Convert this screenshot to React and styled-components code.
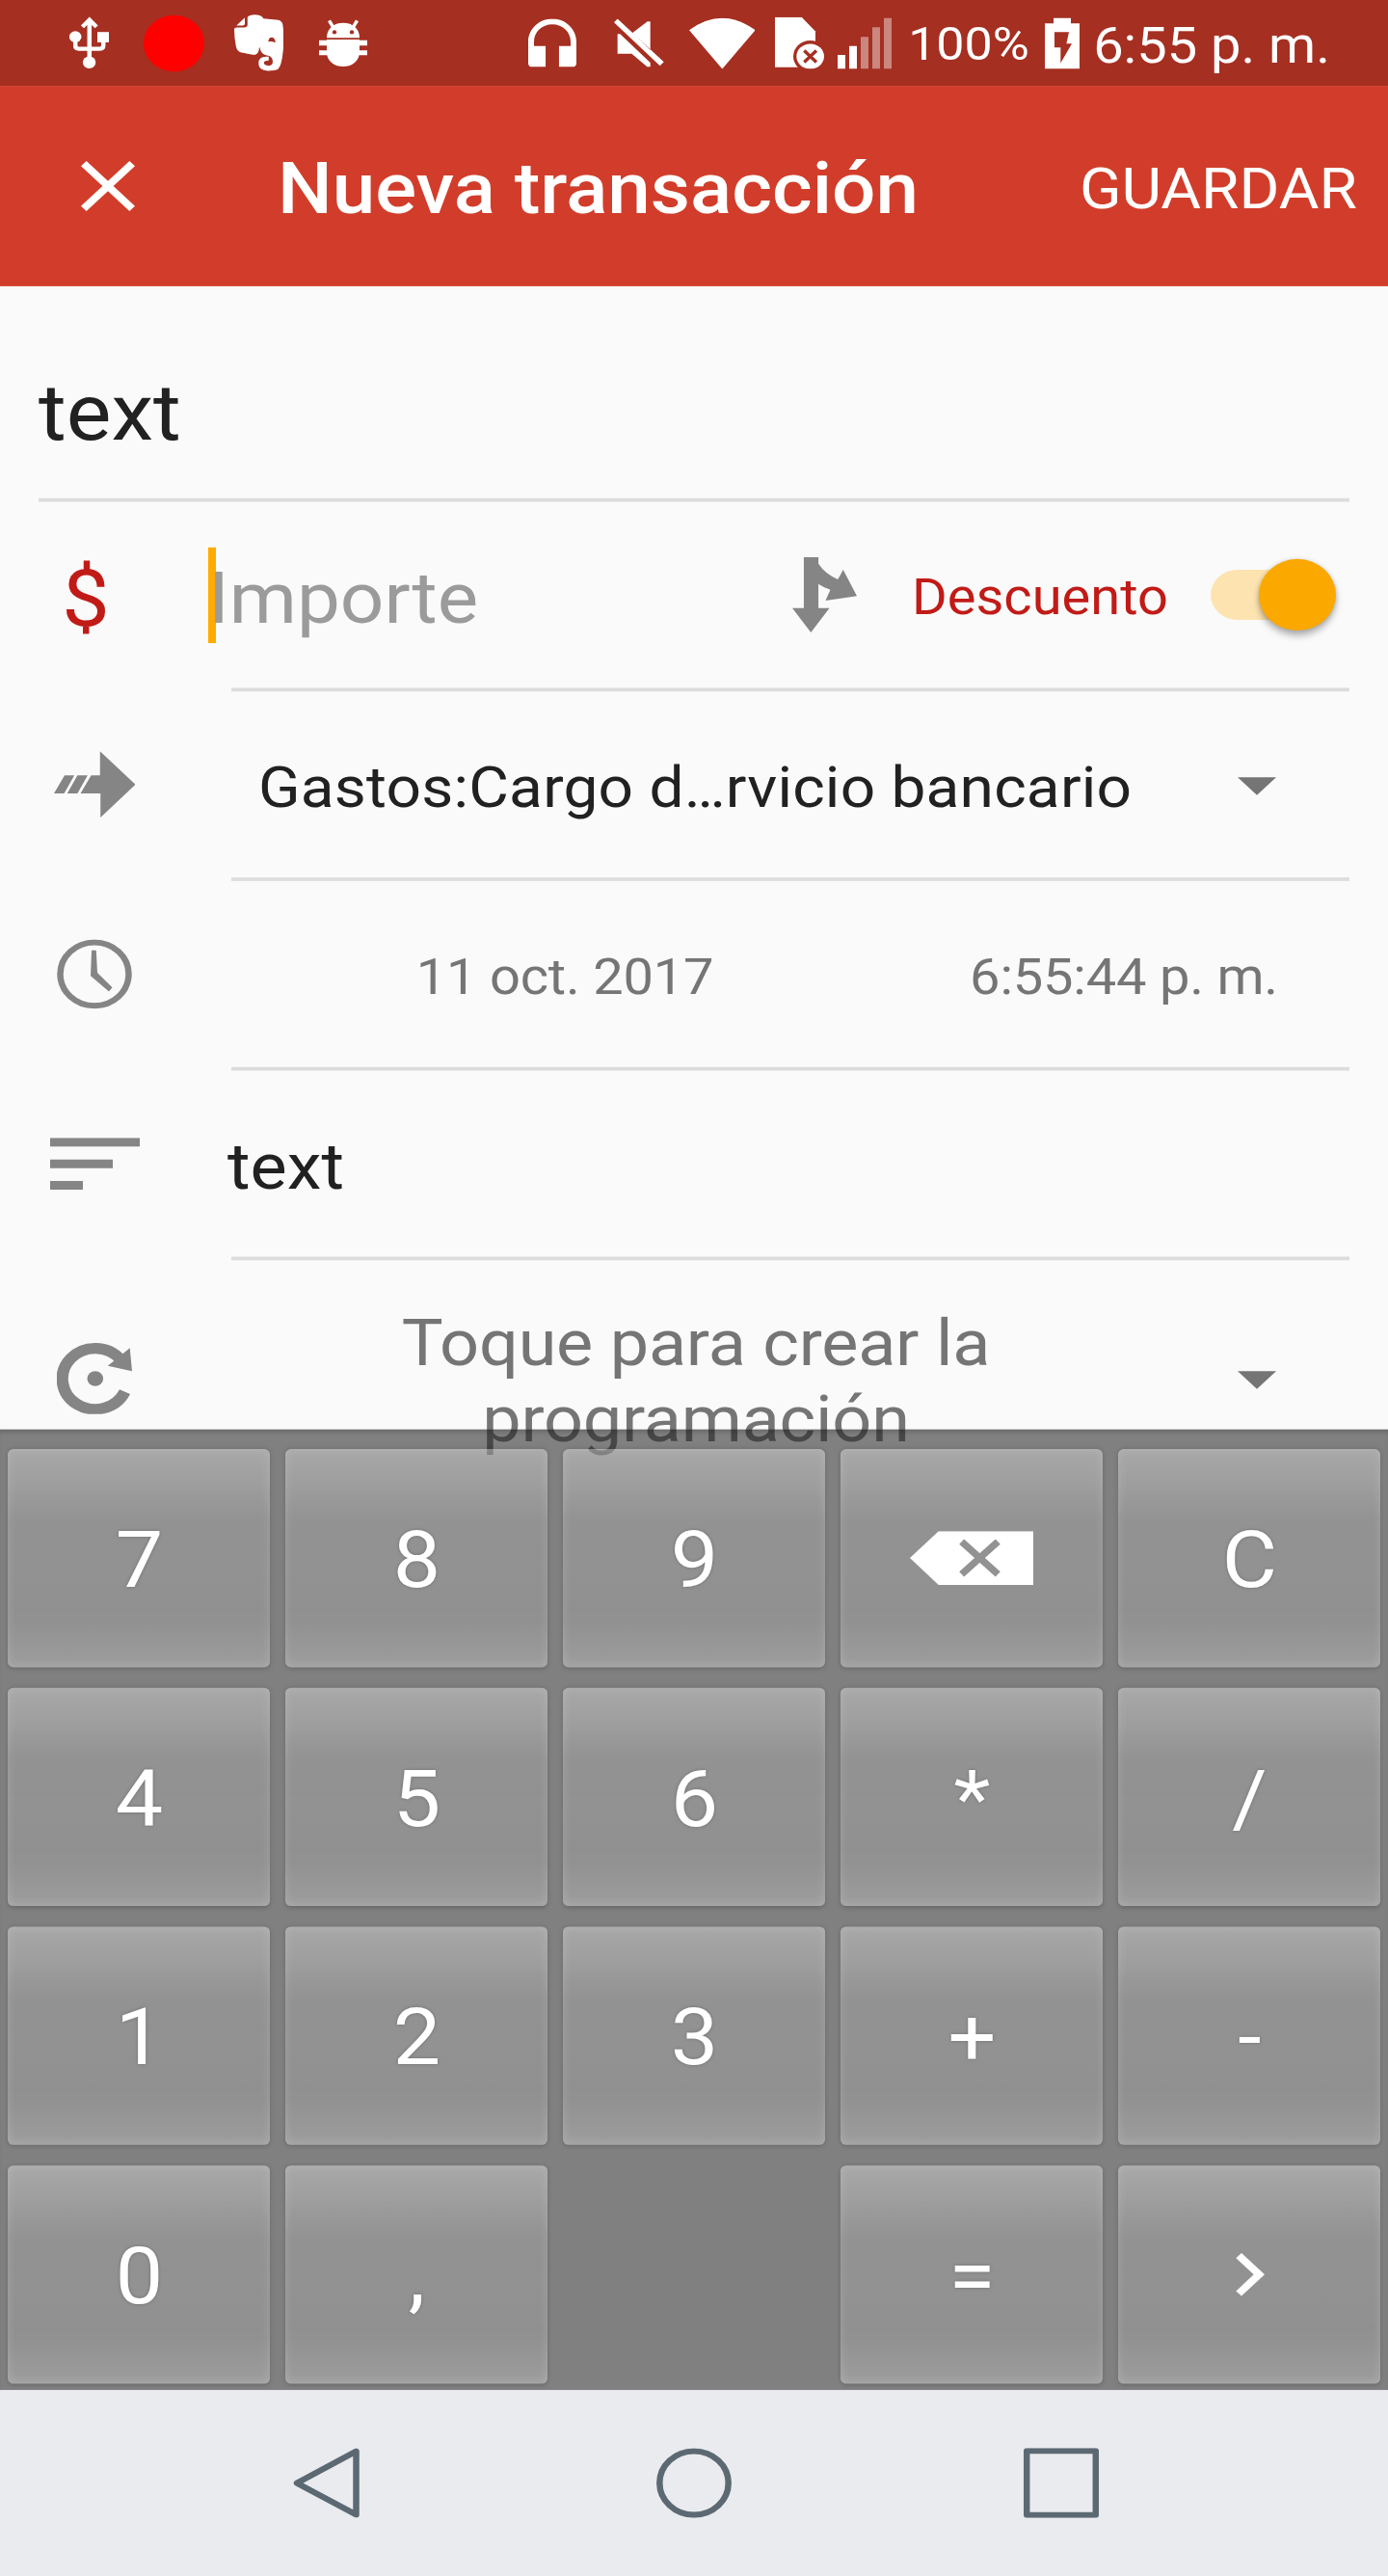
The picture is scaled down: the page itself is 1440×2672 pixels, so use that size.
import React from 'react';
import styled, { createGlobalStyle } from 'styled-components';

const STATUS_RED = '#a52f21';
const ICON_GREY = '#858585';

const GlobalStyle = createGlobalStyle`
  *, *::before, *::after { box-sizing: border-box; }
  body {
    margin: 0;
    background: #fafafa;
    font-family: Roboto, "Noto Sans", sans-serif;
  }
`;

const Viewport = styled.div`
  width: 1440px;
  height: 2672px;
  overflow: hidden;
`;

/* The 18:9 screen (360dp x 720dp at 4px per dp) fitted to the viewport height. */
const Screen = styled.div`
  width: 1440px;
  height: 2880px;
  display: flex;
  flex-direction: column;
  background: #fafafa;
  transform: scaleY(0.92778);
  transform-origin: 0 0;
`;

/* Android's font padding: a little more room above the line than below. */
const Text = styled.span`
  display: block;
  margin-top: ${(p) => (p.$drop || 0) * 2}px;
  padding: 0.129em 0 0.027em;
  font-size: ${(p) => p.$size}px;
  font-weight: ${(p) => p.$weight || 400};
  letter-spacing: ${(p) => p.$tracking || 0}px;
  color: ${(p) => p.$color || '#212121'};
  line-height: 1.172;
  white-space: nowrap;
`;

const StatusBar = styled.header`
  flex: none;
  height: 96px;
  padding: 0 60px 0 72px;
  display: flex;
  align-items: center;
  justify-content: space-between;
  background: ${STATUS_RED};
  color: #fff;
`;

const StatusGroup = styled.div`
  display: flex;
  align-items: center;
`;

const StatusIcon = styled.svg`
  display: block;
  flex: none;
  margin-right: ${(p) => p.$after || 0}px;
`;

const RecordDot = styled.span`
  width: 63px;
  height: 63px;
  margin-right: 31px;
  margin-left: 36px;
  border-radius: 50%;
  background: #f00;
`;

const BatteryLevel = styled(Text)`
  width: 142px;
`;

const Clock = styled(Text)`
  margin-left: 14px;
`;

const AppBar = styled.div`
  flex: none;
  height: 224px;
  padding: 0 32px 0 64px;
  display: flex;
  align-items: center;
  background: #d13d2a;
`;

const CloseIcon = styled.svg`
  width: 96px;
  height: 96px;
  fill: #fff;
`;

const Title = styled(Text)`
  flex: 1;
  margin-left: 128px;
`;

const Form = styled.main`
  flex: none;
  height: 1278px;
`;

const DescriptionField = styled.div`
  height: 237px;
  padding: 79px 0 0 40px;
`;

const Divider = styled.hr`
  height: 4px;
  margin: 0 40px 0 ${(p) => p.$inset}px;
  border: 0;
  background: #dcdcdc;
`;

const Row = styled.div`
  height: ${(p) => p.$height || 208}px;
  padding-right: 40px;
  display: flex;
  align-items: center;
`;

const IconCell = styled.div`
  flex: none;
  width: 196px;
  padding-right: ${(p) => p.$shift || 0}px;
  display: flex;
  justify-content: center;
`;

const Field = styled.div`
  flex: ${(p) => (p.$width ? 'none' : 1)};
  width: ${(p) => (p.$width ? `${p.$width}px` : 'auto')};
  margin-left: ${(p) => p.$left || 0}px;
  text-align: ${(p) => p.$align || 'left'};
`;

const AmountField = styled.div`
  width: 606px;
  height: 107px;
  margin-left: 20px;
  display: flex;
  align-items: center;
  border-left: 8px solid #ffab00;
`;

const AmountHint = styled(Text)`
  margin-left: -8px;
`;

const TypeLabel = styled(Text)`
  width: 310px;
  margin-left: 57px;
`;

const SwitchTrack = styled.div`
  width: 120px;
  height: 56px;
  display: flex;
  align-items: center;
  justify-content: flex-end;
  border-radius: 28px;
  background: #fde3b0;
`;

const SwitchThumb = styled.div`
  flex: none;
  width: 80px;
  height: 80px;
  margin-right: -10px;
  border-radius: 50%;
  background: #fba800;
  box-shadow: 0 6px 8px rgba(0, 0, 0, 0.28), 0 0 5px rgba(0, 0, 0, 0.14);
`;

const Caret = styled.span`
  flex: none;
  width: 0;
  height: 0;
  margin-right: 76px;
  margin-top: 4px;
  border: 20px solid transparent;
  border-top-color: #757575;
  border-bottom: 0;
`;

const Keyboard = styled.div`
  flex: none;
  position: relative;
  height: 1074px;
  padding: 21.5px 8px 7.5px;
  display: grid;
  grid-template-columns: repeat(5, 272px);
  grid-template-rows: repeat(4, 244px);
  gap: 23px 16px;
  background: rgba(39, 39, 39, 0.578);
  box-shadow: inset 0 5px 5px -2px rgba(0, 0, 0, 0.18);
`;

const Key = styled.button`
  padding: 0;
  display: flex;
  align-items: center;
  justify-content: center;
  border: 0;
  border-radius: 6px;
  font-family: inherit;
  text-shadow: 0 0 4px rgba(0, 0, 0, 0.25);
  background: linear-gradient(
    rgba(255, 255, 255, 0.31) 0%,
    rgba(255, 255, 255, 0.24) 15%,
    rgba(255, 255, 255, 0.15) 33%,
    rgba(255, 255, 255, 0.135) 78%,
    rgba(255, 255, 255, 0.23) 100%
  );
  box-shadow: inset 0 0 10px rgba(255, 255, 255, 0.17), 0 1px 5px rgba(0, 0, 0, 0.2);
`;

const KeyLabel = styled(Text)`
  padding-left: 1px;
`;

const EmptyCell = styled.span``;

const NavBar = styled.nav`
  flex: none;
  height: 208px;
  padding: 0 300px;
  display: flex;
  align-items: center;
  justify-content: space-between;
  background: #e9ebee;
`;

const NavIcon = styled.svg`
  width: 78px;
  height: 78px;
  fill: none;
  stroke: #5c6972;
  stroke-width: 6.5;
  stroke-linejoin: round;
`;

const UsbIcon = () => (
  <StatusIcon width="41" height="96" viewBox="72 0 41 96" fill="#fff">
    <circle cx="78.2" cy="41" r="6.3" />
    <rect x="101" y="35.8" width="12" height="11.5" />
    <circle cx="92.6" cy="69.8" r="6.7" />
    <path
      d="M92.8 23V66M85.5 30l7.3-7.8 7.3 7.8M78.2 44v7q0 3.5 3.5 3.5h22q3.5 0 3.5-3.5v-7"
      fill="none"
      stroke="#fff"
      strokeWidth="4.5"
    />
  </StatusIcon>
);

const ElephantIcon = () => (
  <StatusIcon $after={37} width="51.4" height="63.2" viewBox="528 45 112 176" preserveAspectRatio="none">
    <g fill="#fff">
      <path d="M533 80L552 55V75Q552 80 547 80z" />
      <path d="M558 54Q562 46 574 46Q590 46 594 58L628 63Q637 66 638 80Q642 120 638 165Q635 205 627 216Q620 221 604 221Q583 220 583 198Q583 177 600 177H606V189Q595 189 595 197Q596 204 606 205Q616 204 615 190Q614 175 602 173Q588 170 585 146L583 160Q580 172 570 171L544 164Q535 161 532 145Q528 118 528 93Q528 86 534 86H550Q558 86 558 78z" />
    </g>
    <path d="M605 130Q606 117 613 117Q621 119 621 133Q613 128 605 130z" fill={STATUS_RED} />
  </StatusIcon>
);

const DebugIcon = () => (
  <StatusIcon width="50" height="96" viewBox="331 0 50 96" fill="#fff">
    <path d="M339 42.2c0-10 7-16.6 17-16.6s17 6.6 17 16.6z" />
    <path d="M341.5 23l4.5 8M370.5 23l-4.5 8" stroke="#fff" strokeWidth="3.5" />
    <circle cx="347" cy="36" r="2.2" fill={STATUS_RED} />
    <circle cx="365" cy="36" r="2.2" fill={STATUS_RED} />
    <path d="M331 45h8v-.8h34v.8h8v5.800h-8v5.400h8v5.500h-8.400c-1.500 7.500-8 12.700-16.600 12.700s-15.200-5.200-16.700-12.700H331v-5.500h8v-5.400h-8z" />
  </StatusIcon>
);

const HeadsetIcon = () => (
  <StatusIcon $after={39.3} width="50" height="54" viewBox="3 1 18 19" preserveAspectRatio="none" fill="#fff">
    <path d="M12 1c-4.970 0-9 4.030-9 9v8.500c0 .9.600 1.500 1.500 1.500h5v-8.300H5.160V10c0-3.870 2.980-6.840 6.840-6.840S18.840 6.130 18.840 10v1.700H14.500V20h5c.9 0 1.500-.6 1.500-1.500V10c0-4.970-4.030-9-9-9z" />
  </StatusIcon>
);

const MuteIcon = () => (
  <StatusIcon $after={25.7} width="52" height="54" viewBox="358 55 156 149" preserveAspectRatio="none" fill="#fff">
    <path d="M471 63h-9l-46 35 55 53zM369 102h8l94 88v14h-9l-49-41h-44zM358 66l11-11 144 133-12 12z" />
  </StatusIcon>
);

const WifiIcon = () => (
  <StatusIcon $after={20.7} width="68.6" height="57" viewBox="590 54 206 159" preserveAspectRatio="none" fill="#fff">
    <path d="M590 92Q693 17 796 92L693 213z" />
  </StatusIcon>
);

const NoSimIcon = () => (
  <StatusIcon $after={13.7} width="51.3" height="58" viewBox="858 55 154 162" preserveAspectRatio="none" fill="#fff">
    <path d="M858 55h83l43 45v112H858z" />
    <ellipse cx="968" cy="178" rx="53" ry="50" fill={STATUS_RED} />
    <ellipse cx="968" cy="178" rx="43" ry="39" />
    <path d="M949 160l38 36M987 160l-38 36" stroke={STATUS_RED} strokeWidth="10" />
  </StatusIcon>
);

const SignalIcon = () => (
  <StatusIcon $after={17} width="56" height="57" viewBox="1053 55 168 158" preserveAspectRatio="none" fill="#fff">
    <path d="M1053 170h24v43h-24zM1089 142h24v71h-24z" />
    <path opacity=".42" d="M1125 114h24v99h-24zM1161 84h24v129h-24zM1197 55h24v158h-24z" />
  </StatusIcon>
);

const BatteryIcon = () => (
  <StatusIcon width="36" height="57" viewBox="438 55 108 158" preserveAspectRatio="none">
    <path
      fill="#fff"
      fillRule="evenodd"
      d="M465 55h54v17h27v141H438V72h27zM468 99v48h19v48l35-60h-17l8-36z"
    />
  </StatusIcon>
);

const SplitIcon = () => (
  <svg width="67" height="84" viewBox="223 233 146 234" preserveAspectRatio="none" fill={ICON_GREY}>
    <path d="M249 233h33v20q14 30 44 49l12-30 31 82-71 14 11-34q-17-8-27-18v75h25l-42 76-42-76h26z" />
  </svg>
);

const TransferIcon = () => (
  <svg width="84.5" height="74" viewBox="122 179 184 204" preserveAspectRatio="none" fill={ICON_GREY}>
    <path d="M146 253h22l-23 56h-23zM175 253h23l-23 56h-23zM206 253h20v-74l80 102-79 102v-74h-45z" />
  </svg>
);

const ClockIcon = () => (
  <svg width="78" height="78" viewBox="0 0 78 78">
    <circle cx="39" cy="39" r="35.5" fill="none" stroke={ICON_GREY} strokeWidth="6.5" />
    <path d="M36 12.500h4.800l1.200 25L57.500 54l-3.500 4.500L35 41z" fill={ICON_GREY} />
  </svg>
);

const NotesIcon = () => (
  <svg width="93" height="58" viewBox="0 0 93 58" fill={ICON_GREY}>
    <path d="M0 0h93v9.700H0zM0 24.300h65V34H0zM0 48.300h34v9.700H0z" />
  </svg>
);

const RecurrenceIcon = () => (
  <svg width="78" height="80" viewBox="0 0 78 80">
    <path d="M70.500 55A34 34 0 1 1 66 19" fill="none" stroke={ICON_GREY} strokeWidth="12.2" />
    <path d="M75.700 6L78 32 52.800 26z" fill={ICON_GREY} />
    <circle cx="39.8" cy="40.3" r="8.3" fill={ICON_GREY} />
  </svg>
);

const BackspaceIcon = () => (
  <svg width="128" height="60" viewBox="488 1051 279 125" preserveAspectRatio="none">
    <path fill="#fff" d="M488 1113l65-62h214v125H553z" />
    <path d="M605 1075l82 76M687 1075l-82 76" stroke="#929292" strokeWidth="16" />
  </svg>
);

const NextIcon = () => (
  <svg width="96" height="96" viewBox="0 0 24 24" fill="#fff">
    <path d="M8.590 16.590L13.170 12 8.590 7.410 10 6l6 6-6 6z" />
  </svg>
);

const KEYS = [
  '7', '8', '9', 'delete', 'C',
  '4', '5', '6', '*', '/',
  '1', '2', '3', '+', '-',
  '0', ',', '', '=', 'next',
];

function KeyFace({ value }) {
  if (value === 'delete') return <BackspaceIcon />;
  if (value === 'next') return <NextIcon />;
  return <KeyLabel $size={88} $color="#fff" $drop={-2}>{value}</KeyLabel>;
}

export default function App() {
  return (
    <Viewport>
      <GlobalStyle />
      <Screen>
        <StatusBar>
          <StatusGroup>
            <UsbIcon />
            <RecordDot />
            <ElephantIcon />
            <DebugIcon />
          </StatusGroup>
          <StatusGroup>
            <HeadsetIcon />
            <MuteIcon />
            <WifiIcon />
            <NoSimIcon />
            <SignalIcon />
            <BatteryLevel $size={52} $color="#fff">100%</BatteryLevel>
            <BatteryIcon />
            <Clock $size={56} $color="#fff" $drop={1}>6:55 p. m.</Clock>
          </StatusGroup>
        </StatusBar>

        <AppBar>
          <CloseIcon viewBox="0 0 24 24">
            <path d="M19 6.410L17.590 5 12 10.590 6.410 5 5 6.410 10.590 12 5 17.590 6.410 19 12 13.410 17.590 19 19 17.590 13.410 12z" />
          </CloseIcon>
          <Title $size={80} $weight={500} $color="#fff">Nueva transacción</Title>
          <Text $size={64} $color="#fff">GUARDAR</Text>
        </AppBar>

        <Form>
          <DescriptionField>
            <Text $size={88}>text</Text>
          </DescriptionField>
          <Divider $inset={40} />

          <Row>
            <IconCell $shift={18}>
              <Text $size={88} $color="#c11b17">$</Text>
            </IconCell>
            <AmountField>
              <AmountHint $size={80} $color="#9b9b9b" $drop={1}>Importe</AmountHint>
            </AmountField>
            <SplitIcon />
            <TypeLabel $size={56} $color="#c11b17" $drop={1}>Descuento</TypeLabel>
            <SwitchTrack>
              <SwitchThumb />
            </SwitchTrack>
          </Row>
          <Divider $inset={240} />

          <Row>
            <IconCell><TransferIcon /></IconCell>
            <Field $left={72}>
              <Text $size={64} $tracking={0.21}>Gastos:Cargo d…rvicio bancario</Text>
            </Field>
            <Caret />
          </Row>
          <Divider $inset={240} />

          <Row>
            <IconCell><ClockIcon /></IconCell>
            <Field $left={100} $width={580} $align="center">
              <Text $size={56} $color="#757575" $tracking={-0.2} $drop={0.5}>11 oct. 2017</Text>
            </Field>
            <Field $width={580} $align="center">
              <Text $size={56} $color="#757575" $tracking={-0.2} $drop={0.5}>6:55:44 p. m.</Text>
            </Field>
          </Row>
          <Divider $inset={240} />

          <Row>
            <IconCell><NotesIcon /></IconCell>
            <Field $left={40}>
              <Text $size={72} $drop={0.5}>text</Text>
            </Field>
          </Row>
          <Divider $inset={240} />

          <Row $height={264}>
            <IconCell><RecurrenceIcon /></IconCell>
            <Field $left={44} $width={964} $align="center">
              <Text $size={72} $color="#757575" $tracking={-0.22}>
                Toque para crear la
                <br />
                programación
              </Text>
            </Field>
            <Field />
            <Caret />
          </Row>
        </Form>

        <Keyboard>
          {KEYS.map((value, i) =>
            value ? (
              <Key key={i} type="button">
                <KeyFace value={value} />
              </Key>
            ) : (
              <EmptyCell key={i} />
            )
          )}
        </Keyboard>

        <NavBar>
          <NavIcon viewBox="0 0 78 78">
            <path d="M69.500 3.500v71L8 39z" />
          </NavIcon>
          <NavIcon viewBox="0 0 78 78">
            <circle cx="39" cy="39" r="35.7" />
          </NavIcon>
          <NavIcon viewBox="0 0 78 78">
            <rect x="3.2" y="3.2" width="71.6" height="71.6" />
          </NavIcon>
        </NavBar>
      </Screen>
    </Viewport>
  );
}
